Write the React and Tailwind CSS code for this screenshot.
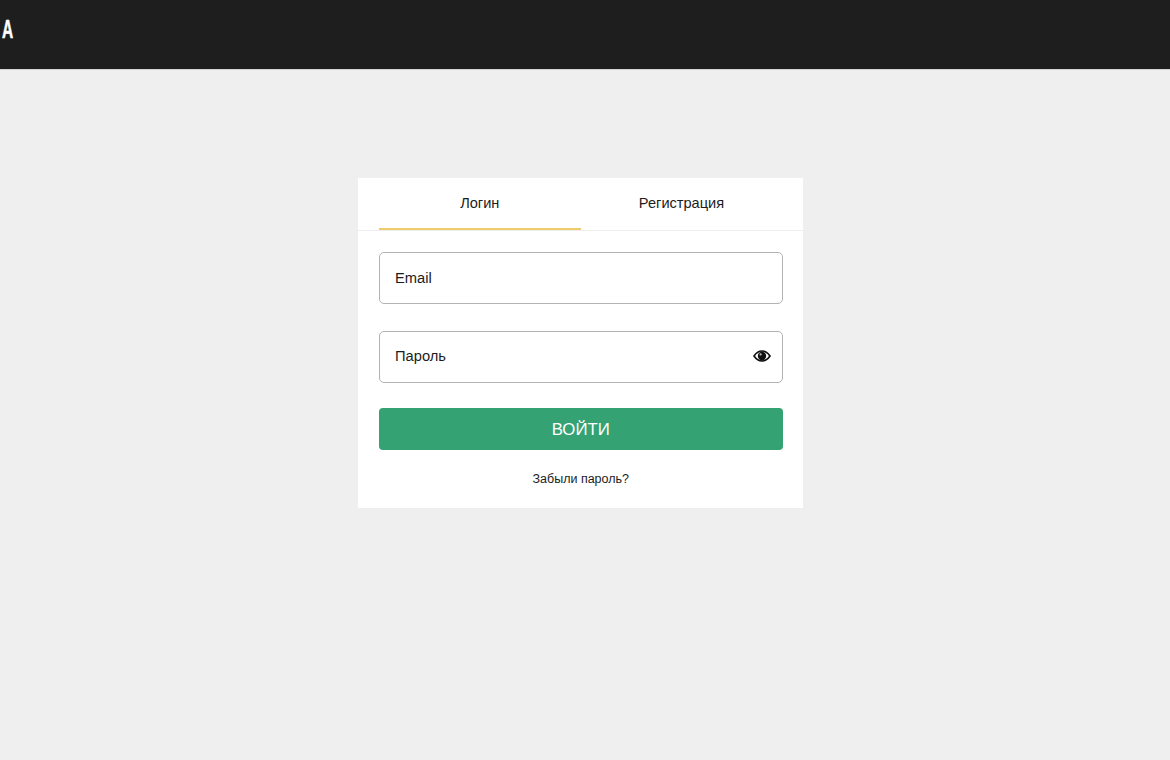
const fieldClass =
  "flex items-center justify-between rounded-[5px] border border-[#b3b3b3] bg-white pl-[15px] pr-[11px] text-[14.7px] text-[#1c1c1c]";

function EyeIcon() {
  return (
    <svg width="18" height="12" viewBox="0 0 18 12">
      <path
        d="M1 6 C3.5 2.4 6 1 9 1 C12 1 14.5 2.4 17 6 C14.5 9.6 12 11 9 11 C6 11 3.5 9.6 1 6 Z"
        fill="white"
        stroke="#111111"
        strokeWidth="1.7"
      />
      <circle cx="9" cy="6" r="4.2" fill="#111111" />
      <circle cx="7.6" cy="4.4" r="1.1" fill="#bdbdbd" />
    </svg>
  );
}

function App() {
  return (
    <div className="flex min-h-[760px] flex-col bg-[#efefef] font-['Liberation_Sans',Arial,sans-serif]">
      {/* Top bar, the logo is cut off by the left edge */}
      <header className="flex h-[70px] items-center border-b border-[#d4d4d4] bg-[#1e1e1e]">
        <span className="ml-[2px] mb-[11px] inline-block origin-left scale-x-[0.62] text-[25px] leading-none font-bold text-white [-webkit-text-stroke:0.5px_white]">
          A
        </span>
      </header>

      <main className="flex justify-center pt-[108px] pr-[9px]">
        <div className="h-[330px] w-[445px] bg-white">
          {/* Tabs */}
          <div className="flex h-[53px] border-b border-[#eeeeee] pl-[21px]">
            <button className="h-[52px] w-[201.5px] border-b-2 border-[#eecb6b] pt-[1px] text-[14.6px] text-[#1c1c1c]">
              Логин
            </button>
            <button className="h-[52px] w-[202px] text-[14.6px] text-[#1c1c1c]">
              Регистрация
            </button>
          </div>

          {/* Form */}
          <div className="flex w-[424.5px] flex-col pt-[21px] pl-[21px]">
            <div className={`h-[52px] ${fieldClass}`}>Email</div>
            <div className={`mt-[27px] h-[51.5px] pb-[2px] ${fieldClass}`}>
              Пароль
              <EyeIcon />
            </div>
            <button className="mt-[25.5px] h-[42px] rounded-[4px] bg-[#34a273] pt-[1px] text-[16.8px] text-white">
              ВОЙТИ
            </button>
            <a className="mt-[21px] text-center text-[12.5px] leading-[16px] text-[#1c1c1c]">
              Забыли пароль?
            </a>
          </div>
        </div>
      </main>
    </div>
  );
}

export default App;
